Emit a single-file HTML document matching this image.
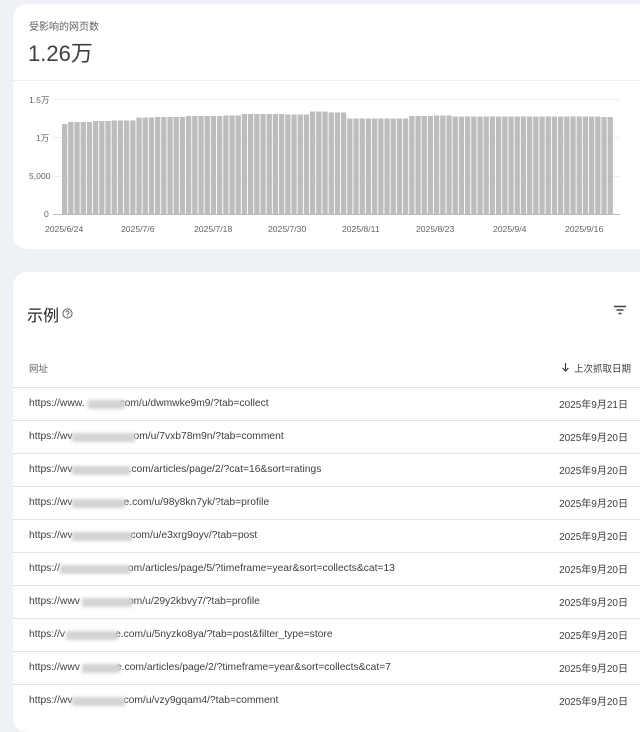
<!DOCTYPE html>
<html><head><meta charset="utf-8"><style>
*{margin:0;padding:0;box-sizing:border-box}
body{width:640px;height:720px;background:#eef2f7;font-family:"Liberation Sans","Noto Sans CJK SC",sans-serif;position:relative;overflow:hidden;color:#202124}
.card{position:absolute;background:#fff;border-radius:14px}
.t{position:absolute;white-space:nowrap}
.ax{font-size:8.6px;color:#5f6368}
.row{position:absolute;left:13px;width:627px;height:33px;border-top:1px solid #e3e3e3}
.row .u{position:absolute;left:16px;top:10px;font-size:10.3px;color:#3c4043}
.row .d{position:absolute;right:12px;top:8px;font-size:10px;color:#3c4043}
.blur{position:absolute;height:9px;top:12px;background:#d3d3d3;filter:blur(1.5px)}
</style></head><body>
<div class="card" style="left:13px;top:4px;width:640px;height:245px"></div>
<div class="t" style="left:29px;top:18px;font-size:10px;color:#5f6368">受影响的网页数</div>
<div class="t" style="left:28px;top:36px;font-size:22px;color:#3c4043">1.26万</div>
<div style="position:absolute;left:13px;top:80px;width:627px;height:1px;background:#eee"></div>
<svg style="position:absolute;left:0;top:0" width="640" height="250">
<g stroke="#eee" stroke-width="1"><line x1="53" y1="99.5" x2="620" y2="99.5"/><line x1="53" y1="137.5" x2="620" y2="137.5"/><line x1="53" y1="176.5" x2="620" y2="176.5"/></g>
<line x1="53" y1="214.5" x2="620" y2="214.5" stroke="#bbb"/>
<g id="bars" fill="#bdbdbd"></g>
</svg>
<div class="t ax" style="left:29px;top:94px">1.5万</div>
<div class="t ax" style="left:36px;top:132px">1万</div>
<div class="t ax" style="left:29px;top:171px">5,000</div>
<div class="t ax" style="left:44px;top:209px">0</div>
<div class="t ax" style="left:45px;top:224px">2025/6/24</div>
<div class="t ax" style="left:121px;top:224px">2025/7/6</div>
<div class="t ax" style="left:194px;top:224px">2025/7/18</div>
<div class="t ax" style="left:268px;top:224px">2025/7/30</div>
<div class="t ax" style="left:342px;top:224px">2025/8/11</div>
<div class="t ax" style="left:416px;top:224px">2025/8/23</div>
<div class="t ax" style="left:493px;top:224px">2025/9/4</div>
<div class="t ax" style="left:565px;top:224px">2025/9/16</div>

<div class="card" style="left:13px;top:272px;width:640px;height:460px"></div>
<div class="t" style="left:27px;top:302px;font-size:16px;color:#202124">示例</div>
<svg style="position:absolute;left:62px;top:308px" width="11" height="11" viewBox="0 0 12 12"><circle cx="6" cy="6" r="5" fill="none" stroke="#5f6368" stroke-width="1.1"/><path d="M4.4 4.8a1.6 1.6 0 1 1 2.3 1.4c-.5.3-.7.6-.7 1.1" fill="none" stroke="#5f6368" stroke-width="1.1"/><circle cx="6" cy="8.8" r=".6" fill="#5f6368"/></svg>
<svg style="position:absolute;left:613px;top:305px" width="14" height="10"><g stroke="#3c4043" stroke-width="1.5"><line x1="1" y1="1.5" x2="13" y2="1.5"/><line x1="3.5" y1="5" x2="10.5" y2="5"/><line x1="5.5" y1="8.5" x2="8.5" y2="8.5"/></g></svg>
<div class="t" style="left:29px;top:361px;font-size:9.5px;color:#5f6368">网址</div>
<svg style="position:absolute;left:561px;top:362px" width="9" height="10"><path d="M4.5 1v8M1.5 6l3 3 3-3" fill="none" stroke="#3c4043" stroke-width="1.2"/></svg>
<div class="t" style="left:574px;top:361px;font-size:9.5px;color:#3c4043">上次抓取日期</div>
<div id="rows"></div>
<script>
function v(i){if(i==0)return 124;if(i<5)return 122;if(i<8)return 121;if(i<12)return 120.5;if(i<15)return 117.5;if(i<20)return 117;if(i<26)return 116;if(i<29)return 115.5;if(i<36)return 114;if(i<40)return 114.5;if(i<43)return 111.5;if(i<46)return 112.5;if(i<56)return 118.5;if(i<60)return 116;if(i<63)return 115.5;if(i<87)return 116.5;return 117;}
var g='';for(var i=0;i<89;i++){var x=62+i*6.2,y=v(i);g+='<rect x="'+x.toFixed(1)+'" y="'+y+'" width="5.3" height="'+(214-y)+'"/>';}
document.getElementById('bars').innerHTML=g;
var R=[["https://www.","com/u/dwmwke9m9/?tab=collect",88,125,"2025年9月21日"],
["https://wv","om/u/7vxb78m9n/?tab=comment",72,135,"2025年9月20日"],
["https://wv",".com/articles/page/2/?cat=16&sort=ratings",72,130,"2025年9月20日"],
["https://wv","e.com/u/98y8kn7yk/?tab=profile",72,125,"2025年9月20日"],
["https://wv","com/u/e3xrg9oyv/?tab=post",72,132,"2025年9月20日"],
["https://","om/articles/page/5/?timeframe=year&sort=collects&cat=13",60,130,"2025年9月20日"],
["https://wwv","om/u/29y2kbvy7/?tab=profile",82,132,"2025年9月20日"],
["https://v","e.com/u/5nyzko8ya/?tab=post&filter_type=store",66,118,"2025年9月20日"],
["https://wwv","e.com/articles/page/2/?timeframe=year&sort=collects&cat=7",82,120,"2025年9月20日"],
["https://wv","com/u/vzy9gqam4/?tab=comment",72,125,"2025年9月20日"]];
var h='';R.forEach(function(r,i){var t=387+i*33;
h+='<div class="row" style="top:'+t+'px"><span class="u">'+r[0].replace(/&/g,'&amp;')+'<span style="display:inline-block;width:'+(r[3]-r[2]-2)+'px"></span>'+r[1].replace(/&/g,'&amp;')+'</span><div class="blur" style="left:'+(r[2]-13)+'px;width:'+(r[3]-r[2])+'px"></div><span class="d">'+r[4]+'</span></div>';});
document.getElementById('rows').innerHTML=h;
</script>
</body></html>
